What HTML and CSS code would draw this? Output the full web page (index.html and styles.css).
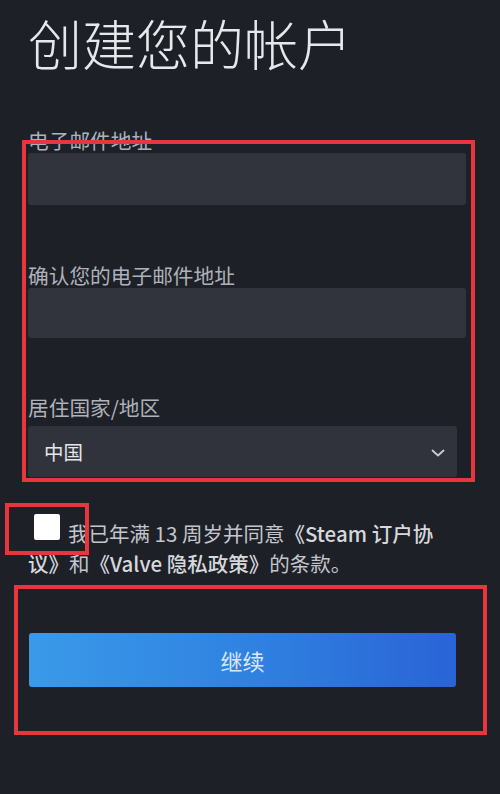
FILE: index.html
```html
<!DOCTYPE html>
<html lang="zh-CN">
<head>
<meta charset="utf-8">
<title>创建您的帐户</title>
<link rel="stylesheet" href="styles.css">
</head>
<body>
<div class="page">
  <h1 class="title">创建您的帐户</h1>
  <form class="form">
    <label class="label label-first">电子邮件地址</label>
    <div class="input"></div>
    <label class="label label-second">确认您的电子邮件地址</label>
    <div class="input input-second"></div>
    <label class="label label-third">居住国家/地区</label>
    <div class="select">
      <span class="select-value">中国</span>
      <svg class="chevron" width="14" height="8" viewBox="0 0 14 8"><path d="M1.5 1.5 L7 6.5 L12.5 1.5" fill="none" stroke="#c9ccd2" stroke-width="1.8" stroke-linecap="round" stroke-linejoin="round"/></svg>
    </div>
    <p class="agree"><span class="checkbox"></span>我已年满 13 周岁并同意<span class="link">《Steam 订户协议》</span>和<span class="link">《Valve 隐私政策》</span>的条款。</p>
    <div class="button">继续</div>
  </form>
  <div class="mark mark-fields"></div>
  <div class="mark mark-check"></div>
  <div class="mark mark-button"></div>
</div>
</body>
</html>
```

FILE: styles.css
```css
html, body {
  margin: 0;
  padding: 0;
  background: #1e2027;
}
body {
  font-family: "Noto Sans CJK SC", "Noto Sans", sans-serif;
  color: #b4b8c0;
}
.page {
  position: relative;
  width: 500px;
  height: 794px;
  overflow: hidden;
  padding-left: 28px;
  box-sizing: border-box;
}
.title {
  margin: 0;
  padding-top: 12px;
  font-size: 54px;
  line-height: 62px;
  font-weight: 300;
  color: #e6e8ec;
  letter-spacing: 0;
}
.form {
  display: flex;
  flex-direction: column;
  align-items: flex-start;
}
.label {
  display: block;
  font-size: 20.7px;
  line-height: 24px;
  color: #aeb2ba;
}
.label-first { margin-top: 54px; }
.label-second { margin-top: 58px; }
.label-third { margin-top: 57px; }
.input {
  width: 438px;
  height: 52px;
  margin-top: 1px;
  background: #31343c;
  border-radius: 3px;
}
.input-second {
  height: 50px;
  margin-top: 1px;
}
.select {
  width: 429px;
  height: 51px;
  margin-top: 7px;
  background: #30333b;
  border-radius: 3px;
  display: flex;
  align-items: center;
  justify-content: space-between;
  padding: 0 12px 0 16px;
  box-sizing: border-box;
}
.select-value {
  font-size: 19.5px;
  color: #e4e6ea;
  line-height: 24px;
}
.chevron {
  display: block;
  margin-top: 2px;
}
.agree {
  margin: 37px 0 0 0;
  width: 425px;
  font-size: 20.5px;
  line-height: 30px;
  color: #c3c6cc;
}
.checkbox {
  display: inline-block;
  width: 26px;
  height: 26px;
  background: #ffffff;
  border-radius: 2px;
  margin: 0 8px 0 6px;
  vertical-align: 2px;
}
.link {
  color: #d6d8dc;
  font-weight: 500;
}
.button {
  width: 427px;
  height: 54px;
  margin: 55px 0 0 1px;
  background: linear-gradient(90deg, #3a9ae9 0%, #2f80e0 55%, #2a63d6 100%);
  border-radius: 3px;
  display: flex;
  align-items: center;
  justify-content: center;
  font-size: 22px;
  color: #dbe8fa;
}
.mark {
  position: absolute;
  border: 4px solid #e8363c;
  box-sizing: border-box;
}
.mark-fields {
  left: 22px;
  top: 140px;
  width: 453px;
  height: 342px;
}
.mark-check {
  left: 5px;
  top: 503px;
  width: 84px;
  height: 52px;
}
.mark-button {
  left: 14px;
  top: 585px;
  width: 473px;
  height: 150px;
}
```
